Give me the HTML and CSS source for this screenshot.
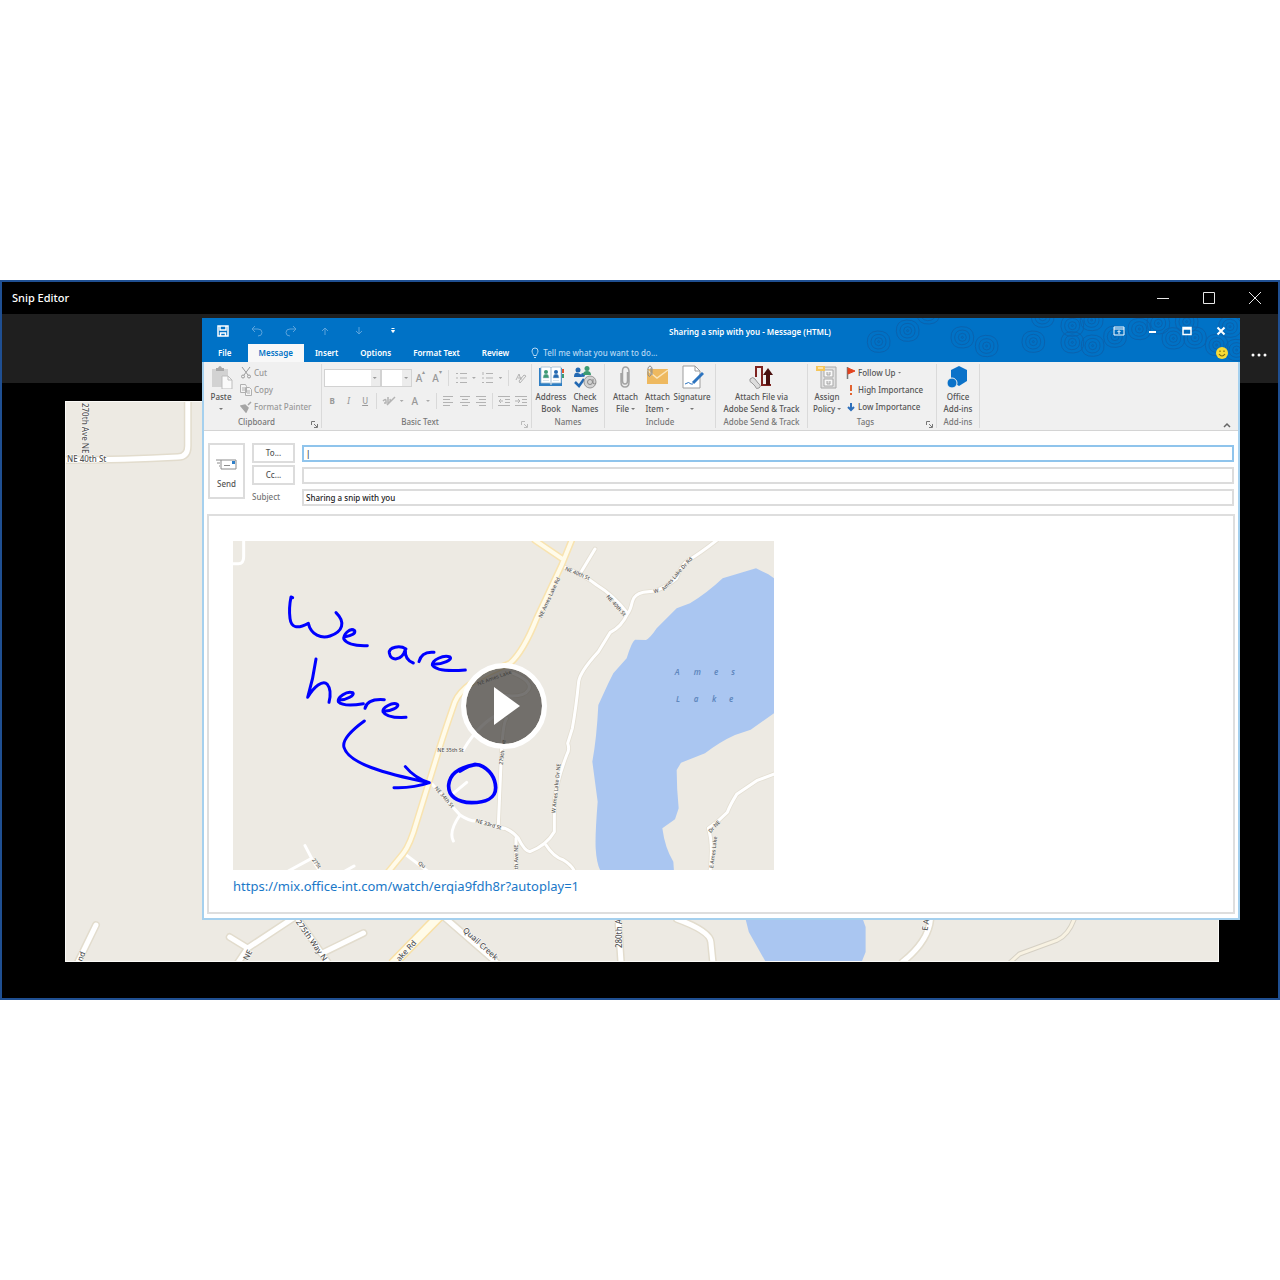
FILE: index.html
```html
<!DOCTYPE html>
<html lang="en">
<head>
    <meta charset="UTF-8">
    <meta name="viewport" content="width=device-width, initial-scale=1.0">
    <title>Snip Editor</title>
    <link rel="stylesheet" href="styles.css">
</head>
<body>
    <div class="editor">
        <header class="editor-title">
            <span>Snip Editor</span>
            <div class="editor-controls">
                <button type="button" aria-label="Minimize"><svg width="12" height="12" viewBox="0 0 12 12"><path d="M0 6.5h12"/></svg></button>
                <button type="button" aria-label="Maximize"><svg width="12" height="12" viewBox="0 0 12 12"><path d="M.5.5h11v11H.5z"/></svg></button>
                <button type="button" aria-label="Close"><svg width="12" height="12" viewBox="0 0 12 12"><path d="M0 0l12 12M12 0L0 12"/></svg></button>
            </div>
        </header>
        <div class="editor-toolbar">
            <button type="button" aria-label="More"><svg width="16" height="4" viewBox="0 0 16 4"><circle cx="2" cy="2" r="1.5"/><circle cx="8" cy="2" r="1.5"/><circle cx="14" cy="2" r="1.5"/></svg></button>
        </div>
        <div class="canvas">
            <svg class="map" viewBox="0 0 1154 561" preserveAspectRatio="xMinYMin slice">
                <rect width="1154" height="561" fill="#edeae3"/>
                <g class="road-edge">
                    <path d="M122 0V44Q122 55 112 55Q60 58 0 58"/>
                    <path d="M30 524L12 561M164 536L182 547L229 516M182 547L170 565M298 532L259 551M233 519L262 561"/>
                    <path d="M380 517L433 563M553 517L556 561M612 518Q645 530 646 541L648 561M866 518Q864 540 838 561"/>
                </g>
                <g class="road">
                    <path d="M122 0V44Q122 55 112 55Q60 58 0 58"/>
                    <path d="M30 524L12 561M164 536L182 547L229 516M182 547L170 565M298 532L259 551M233 519L262 561"/>
                    <path d="M380 517L433 563M553 517L556 561M612 518Q645 530 646 541L648 561M866 518Q864 540 838 561"/>
                </g>
                <path d="M374 515L327 563" stroke="#f9e0a4" stroke-width="11"/>
                <path d="M374 515L327 563" stroke="#fffbe8" stroke-width="8"/>
                <path d="M1010 518Q1004 534 993 539L955 553L944 563" fill="none" stroke="#d5d0c4" stroke-width="5"/>
                <path d="M1010 518Q1004 534 993 539L955 553L944 563" fill="none" stroke="#f8f2e2" stroke-width="3"/>
                <path d="M680 515L684 531L701 561H797L801 551V526L797 515Z" fill="#aac6f1"/>
                <g class="street">
                    <text x="1" y="60">NE 40th St</text>
                    <text transform="translate(16 1) rotate(90)">270th Ave NE</text>
                    <text transform="translate(16 561) rotate(-68)">nd</text>
                    <text transform="translate(182 560) rotate(-62)">NE</text>
                    <text transform="translate(230 521) rotate(55)">275th Way N</text>
                    <text transform="translate(334 561) rotate(-47)">ake Rd</text>
                    <text transform="translate(397 530) rotate(42)">Quail Creek</text>
                    <text transform="translate(557 547) rotate(-90)">280th Ave</text>
                    <text transform="translate(863 530) rotate(-82)">E Ames</text>
                </g>
            </svg>
        </div>

        <section class="mail">
            <header class="mail-header">
                <svg class="rings" width="380" height="44" viewBox="180 9 1140 132">
                    <defs>
                        <g id="ring">
                            <path d="M-34 2Q-35-30-4-32Q32-33 34-2Q36 30 3 32Q-32 34-34 2Z"/>
                            <path d="M-23-1Q-21-22 1-22Q23-20 22 2Q20 22-2 22Q-23 20-23-1Z"/>
                            <circle r="12"/><circle r="3"/>
                        </g>
                    </defs>
                    <use href="#ring" x="236" y="80"/><use href="#ring" x="323" y="47"/><use href="#ring" x="487" y="67"/>
                    <use href="#ring" x="560" y="93"/><use href="#ring" x="700" y="80"/><use href="#ring" x="817" y="82"/>
                    <use href="#ring" x="878" y="92"/><use href="#ring" x="945" y="65"/><use href="#ring" x="817" y="32"/>
                    <use href="#ring" x="385" y="-5"/><use href="#ring" x="728" y="5"/><use href="#ring" x="875" y="15"/>
                    <use href="#ring" x="1018" y="42"/><use href="#ring" x="1075" y="25"/><use href="#ring" x="1120" y="70"/>
                    <use href="#ring" x="1185" y="68"/><use href="#ring" x="1160" y="20"/><use href="#ring" x="1250" y="90"/>
                    <use href="#ring" x="1290" y="35"/><use href="#ring" x="1310" y="105"/>
                </svg>
                <div class="title-row">
                    <div class="quick">
                        <button type="button" aria-label="Save"><svg width="12" height="12" viewBox="0 0 12 12"><path d="M1 1h10v10H1zM3 1v4h6V1M3.500 11V8h5v3" fill="none" stroke="#fff" stroke-width="1.500"/></svg></button>
                        <button type="button" aria-label="Undo" disabled><svg width="12" height="12" viewBox="0 0 12 12"><path d="M4 1L1 4l3 3M1 4h6q4 0 4 3.500T7 11"/></svg></button>
                        <button type="button" aria-label="Redo" disabled><svg width="12" height="12" viewBox="0 0 12 12"><path d="M8 1l3 3-3 3M11 4H5Q1 4 1 7.500T5 11"/></svg></button>
                        <button type="button" aria-label="Previous item" disabled><svg width="12" height="12" viewBox="0 0 12 12"><path d="M6 10V3M3 6l3-3 3 3"/></svg></button>
                        <button type="button" aria-label="Next item" disabled><svg width="12" height="12" viewBox="0 0 12 12"><path d="M6 2v7M3 6l3 3 3-3"/></svg></button>
                        <button type="button" aria-label="Customize toolbar"><svg width="6" height="8" viewBox="0 0 6 8"><path d="M1.500 1.500h3M1.500 3.500h3L3 5.500z" fill="#fff" stroke="#fff" stroke-width="1"/></svg></button>
                    </div>
                    <h1>Sharing a snip with you - Message (HTML)</h1>
                    <div class="window-controls">
                        <button type="button" aria-label="Ribbon display options"><svg width="12" height="10" viewBox="0 0 12 10"><path d="M1 1h10v8H1zM1 3h10M6 8V5M4.500 6L6 4.500 7.500 6"/></svg></button>
                        <button type="button" aria-label="Minimize"><svg width="10" height="10" viewBox="0 0 10 10"><path d="M1 6h7" stroke-width="2"/></svg></button>
                        <button type="button" aria-label="Maximize"><svg width="10" height="10" viewBox="0 0 10 10"><path d="M1 1.500h8v7H1zM1 3h8" stroke-width="1.500"/></svg></button>
                        <button type="button" aria-label="Close"><svg width="10" height="10" viewBox="0 0 10 10"><path d="M1.500 1.500l7 7M8.500 1.500l-7 7" stroke-width="2"/></svg></button>
                    </div>
                </div>
                <nav class="tabs">
                    <button type="button" class="file">File</button>
                    <button type="button" class="active">Message</button>
                    <button type="button">Insert</button>
                    <button type="button">Options</button>
                    <button type="button">Format Text</button>
                    <button type="button">Review</button>
                    <button type="button" class="tell-me">
                        <svg width="8" height="12" viewBox="0 0 8 12"><path d="M2.500 8.500C2.500 7 1 6 1 4a3 3 0 0 1 6 0c0 2-1.500 3-1.500 4.500zM3 10.500h2" fill="none" stroke="#b5d7f3"/></svg>
                        Tell me what you want to do...
                    </button>
                    <svg class="smiley" width="14" height="14" viewBox="0 0 14 14"><circle cx="7" cy="7" r="6" fill="#f8db36"/><path d="M5 4.500v1.500M9 4.500v1.500M4 8q3 4 6 0" fill="none" stroke="#7d6a10" stroke-width="1.200"/></svg>
                </nav>
            </header>

            <div class="ribbon">
                <div class="group clipboard">
                    <div class="tools">
                        <button type="button" class="big">
                            <svg width="24" height="24" viewBox="0 0 24 24"><path d="M3 4h16v18H3z" fill="#d2d2d2"/><path d="M7 6V3h2q2-4 4 0h2v3z" fill="#a9a9a9"/><path d="M13 11h6l4 4v9H13z" fill="#fafafa" stroke="#bdbdbd"/><path d="M19 11v4h4" fill="none" stroke="#bdbdbd"/></svg>
                            Paste<i class="arrow"></i>
                        </button>
                        <div class="list">
                            <button type="button" disabled><svg width="12" height="12" viewBox="0 0 12 12"><g fill="none" stroke="#9a9a9a"><path d="M2 0l6 8M10 0L4 8"/><circle cx="3" cy="9.500" r="1.500"/><circle cx="9" cy="9.500" r="1.500"/></g></svg>Cut</button>
                            <button type="button" disabled><svg width="12" height="12" viewBox="0 0 12 12"><path d="M.5.5h5l1 2v6h-6zM5.500 3.500h4l2 2v6h-6zM2 4h3M2 6h3M7 7h3M7 9h3" fill="#f4f4f4" stroke="#b0b0b0"/></svg>Copy</button>
                            <button type="button" disabled><svg width="12" height="12" viewBox="0 0 12 12"><path d="M1 5l4-1 3 3-2 4zM8 4l3-3" fill="#a5a5a5" stroke="#a5a5a5" stroke-width="1.500"/></svg>Format Painter</button>
                        </div>
                    </div>
                    <div class="caption">Clipboard</div>
                    <svg class="launcher" width="7" height="7" viewBox="0 0 7 7"><path d="M.5 4V.5H4M3 3l3 3M6.500 3v3.500H3"/></svg>
                </div>

                <div class="group basic">
                    <div class="format">
                        <div class="format-row">
                            <span class="combo font"><select aria-label="Font" disabled><option></option></select></span>
                            <span class="combo size"><select aria-label="Font size" disabled><option></option></select></span>
                            <button type="button" class="grow" aria-label="Grow font" disabled>A<sup>▴</sup></button>
                            <button type="button" class="grow" aria-label="Shrink font" disabled>A<sup>▾</sup></button>
                            <i class="rule"></i>
                            <button type="button" aria-label="Bullets" disabled><svg width="12" height="12" viewBox="0 0 12 12"><path d="M1 1.500h2M5 1.500h7M1 6h2M5 6h7M1 10.500h2M5 10.500h7"/></svg></button>
                            <i class="arrow"></i>
                            <button type="button" aria-label="Numbering" disabled><svg width="12" height="12" viewBox="0 0 12 12"><path d="M2 0v3M5 1.500h7M1 6h2M5 6h7M1 10.500h2M5 10.500h7"/></svg></button>
                            <i class="arrow"></i>
                            <i class="rule"></i>
                            <button type="button" aria-label="Styles" disabled><svg width="12" height="12" viewBox="0 0 12 12"><path d="M1 8l3-6 2 6M3 6h4M5 11l6-7-2-1-5 6z"/></svg></button>
                        </div>
                        <div class="format-row">
                            <button type="button" disabled><b>B</b></button>
                            <button type="button" disabled><em>I</em></button>
                            <button type="button" disabled><u>U</u></button>
                            <i class="rule"></i>
                            <button type="button" aria-label="Highlight" disabled><svg width="14" height="12" viewBox="0 0 14 12"><path d="M1 6q3-3 3 0v2H2M6 2v6q3-1 2-4M5 10l8-8" stroke-width="1.500"/></svg></button>
                            <i class="arrow"></i>
                            <button type="button" class="grow" aria-label="Font color" disabled>A</button>
                            <i class="arrow"></i>
                            <i class="rule"></i>
                            <button type="button" aria-label="Align left" disabled><svg width="12" height="10" viewBox="0 0 12 10"><path d="M1 .5h10M1 3.500h7M1 6.500h10M1 9.500h7"/></svg></button>
                            <button type="button" aria-label="Center" disabled><svg width="12" height="10" viewBox="0 0 12 10"><path d="M1 .5h10M3 3.500h6M1 6.500h10M3 9.500h6"/></svg></button>
                            <button type="button" aria-label="Align right" disabled><svg width="12" height="10" viewBox="0 0 12 10"><path d="M1 .5h10M4 3.500h7M1 6.500h10M4 9.500h7"/></svg></button>
                            <i class="rule"></i>
                            <button type="button" aria-label="Decrease indent" disabled><svg width="12" height="10" viewBox="0 0 12 10"><path d="M0 .5h12M7 3.500h5M7 6.500h5M0 9.500h12M5 5H1M3 3L1 5l2 2"/></svg></button>
                            <button type="button" aria-label="Increase indent" disabled><svg width="12" height="10" viewBox="0 0 12 10"><path d="M0 .5h12M7 3.500h5M7 6.500h5M0 9.500h12M0 5h5M3 3l2 2-2 2"/></svg></button>
                        </div>
                    </div>
                    <div class="caption">Basic Text</div>
                    <svg class="launcher faded" width="7" height="7" viewBox="0 0 7 7"><path d="M.5 4V.5H4M3 3l3 3M6.500 3v3.500H3"/></svg>
                </div>

                <div class="group names">
                    <div class="tools">
                        <button type="button" class="big">
                            <svg width="26" height="24" viewBox="0 0 26 24"><path d="M1 3h23v18H1z" fill="#2f7fc4"/><path d="M3 2h9l1 1 1-1h9v16h-9l-1 2-1-2H3z" fill="#fff" stroke="#9fbbd2" stroke-width=".8"/><path d="M13 3v16" stroke="#9fbbd2"/><path d="M24 4h2v4h-2z" fill="#e2552d"/><path d="M24 9h2v4h-2z" fill="#3d9b73"/><circle cx="8" cy="7" r="2" fill="#3d9b73"/><path d="M5 13q0-4 3-4t3 4zM5 15.500h6" fill="#3d9b73" stroke="#b5c8d6" stroke-width=".5"/><circle cx="18" cy="7" r="2" fill="#2369b3"/><path d="M15 13q0-4 3-4t3 4zM15 15.500h6" fill="#2369b3" stroke="#b5c8d6" stroke-width=".5"/></svg>
                            Address<br>Book
                        </button>
                        <button type="button" class="big">
                            <svg width="24" height="24" viewBox="0 0 24 24"><g fill="#2369b3"><circle cx="5" cy="5" r="2.500"/><path d="M1 12q0-5 4-4t4 4z"/><circle cx="10" cy="10" r="2"/></g><path d="M2 17l4 4 5-7" fill="none" stroke="#2369b3" stroke-width="2.500"/><g fill="#3d9b73"><circle cx="14" cy="3.500" r="2.500"/><path d="M10 10q0-4 4-4t4 4z"/></g><circle cx="17" cy="17" r="6" fill="#d2d2d2" stroke="#969696"/><circle cx="17" cy="17" r="2.500" fill="none" stroke="#888"/><path d="M20 14v4q1 2 3 0" fill="none" stroke="#888"/></svg>
                            Check<br>Names
                        </button>
                    </div>
                    <div class="caption">Names</div>
                </div>

                <div class="group include">
                    <div class="tools">
                        <button type="button" class="big">
                            <svg width="12" height="24" viewBox="0 0 12 24"><path d="M8.500 7v9q0 3-2.500 3t-2.500-3V6Q3.500 2 6.500 2T10 6v11q0 5-4 5t-4-5V8" fill="none" stroke="#a3a3a3" stroke-width="1.500"/></svg>
                            Attach<br>File<i class="arrow inline"></i>
                        </button>
                        <button type="button" class="big">
                            <svg width="24" height="24" viewBox="0 0 24 24"><path d="M2 4h21v15H2z" fill="#eeb960"/><path d="M2 5l10 8L23 5" fill="none" stroke="#fbe5ba" stroke-width="1.500"/><path d="M6 3v7q-2 3-3 0V3q2-4 4 0v7" fill="none" stroke="#8e8e8e"/></svg>
                            Attach<br>Item<i class="arrow inline"></i>
                        </button>
                        <button type="button" class="big">
                            <svg width="24" height="24" viewBox="0 0 24 24"><path d="M3 1h12l5 5v17H3z" fill="#fff" stroke="#9d9d9d"/><path d="M15 1v5h5" fill="none" stroke="#9d9d9d"/><path d="M13 18L23 8" stroke="#2d74bf" stroke-width="3"/><path d="M5 19q4-3 6 0h2" fill="none" stroke="#2d74bf"/></svg>
                            Signature<i class="arrow"></i>
                        </button>
                    </div>
                    <div class="caption">Include</div>
                </div>

                <div class="group adobe">
                    <div class="tools">
                        <button type="button" class="big">
                            <svg width="24" height="24" viewBox="0 0 24 24"><path d="M14 2H7v10M13 2v18h9" fill="none" stroke="#7e2320" stroke-width="2"/><path d="M19 20V9" stroke="#4a100f" stroke-width="4"/><path d="M14 10l5-7 5 7z" fill="#4a100f"/><path d="M1 14q3-3 5 0l3 4q4 3 1 5t-4-2l-3-3q-3-1-2-4z" fill="#ddd" stroke="#999"/></svg>
                            Attach File via<br>Adobe Send &amp; Track
                        </button>
                    </div>
                    <div class="caption">Adobe Send &amp; Track</div>
                </div>

                <div class="group tags">
                    <div class="tools">
                        <button type="button" class="big">
                            <svg width="24" height="24" viewBox="0 0 24 24"><path d="M6 2h15v21H6z" fill="#e0e0e0" stroke="#a8a8a8"/><path d="M9 5h9v7H9zM9 14h9v7H9zM12 7v3h3V7M12 16v3h3v-3" fill="#f8f8f8" stroke="#a8a8a8"/><path d="M1 1h9v5H1z" fill="#f5c65b"/><path d="M3 3h5" stroke="#fff"/></svg>
                            Assign<br>Policy<i class="arrow inline"></i>
                        </button>
                        <div class="list">
                            <button type="button"><svg width="10" height="12" viewBox="0 0 10 12"><path d="M1.500 0v12" stroke="#777" stroke-width="1.500"/><path d="M2 1l7 3-7 3z" fill="#e2431f" stroke="#e2431f"/></svg>Follow Up<i class="arrow"></i></button>
                            <button type="button"><svg width="10" height="12" viewBox="0 0 10 12"><path d="M5 1v6M5 9v2" stroke="#e2622f" stroke-width="2"/></svg>High Importance</button>
                            <button type="button"><svg width="10" height="12" viewBox="0 0 10 12"><path d="M5 2v7M2 6l3 3 3-3" fill="none" stroke="#2d6fbb" stroke-width="2"/></svg>Low Importance</button>
                        </div>
                    </div>
                    <div class="caption">Tags</div>
                    <svg class="launcher" width="7" height="7" viewBox="0 0 7 7"><path d="M.5 4V.5H4M3 3l3 3M6.500 3v3.500H3"/></svg>
                </div>

                <div class="group addins">
                    <div class="tools">
                        <button type="button" class="big">
                            <svg width="24" height="24" viewBox="0 0 24 24"><path d="M13 1l8 4v11l-8 5-8-5V5z" fill="#0b72c9"/><circle cx="6" cy="18" r="5" fill="#0b72c9" stroke="#f0f0f0"/></svg>
                            Office<br>Add-ins
                        </button>
                    </div>
                    <div class="caption">Add-ins</div>
                </div>
                <button type="button" class="collapse" aria-label="Collapse ribbon"><svg width="8" height="6" viewBox="0 0 8 6"><path d="M1 5l3-3 3 3" fill="none" stroke="#666" stroke-width="1.500"/></svg></button>
            </div>

            <form class="fields">
                <button type="button" class="send">
                    <svg width="22" height="14" viewBox="0 0 22 14"><path d="M5 2h15v9H5zM8 7.500h6M0 2h5M1 5h3M3 8h1" fill="none" stroke="#8c8c8c"/><path d="M16 3h3v3h-3z" fill="#2d7fc9"/></svg>
                    Send
                </button>
                <button type="button" class="pick">To...</button>
                <input type="text" class="focused" aria-label="To" value="|">
                <button type="button" class="pick">Cc...</button>
                <input type="text" aria-label="Cc">
                <label for="subject">Subject</label>
                <input type="text" id="subject" value="Sharing a snip with you">
            </form>

            <div class="message">
                <div class="snip">
                    <svg viewBox="0 0 1623 987">
                        <rect width="1623" height="987" fill="#edeae3"/>
                        <g transform="translate(801 -18)">
                            <path d="M822 130L805 118L768 100L668 130Q620 175 570 205L530 220L470 280Q450 310 438 315L405 314Q395 320 380 370L340 415L325 445L295 510Q290 610 277 680L293 800Q285 900 287 940Q290 990 303 1010H522L520 980Q495 940 487 880L525 853L536 820Q530 760 530 705L543 683L615 655Q660 620 705 600L752 584L822 535Z" fill="#aac6f1"/>
                            <g class="small-edge">
                                <path d="M650 16Q600 55 565 76Q545 85 530 130Q500 155 465 168L430 172Q402 178 397 200Q390 230 383 235Q365 275 330 293L295 350Q240 410 236 440Q228 520 217 580L203 625Q210 645 200 660Q170 740 163 800V890Q140 930 90 950Q75 950 55 910Q30 880 0 877"/>
                                <path d="M190 95Q260 125 290 150Q340 180 383 235M285 42L245 108M138 930Q160 965 190 975Q215 990 224 1010M48 910V1010M825 716L770 737L710 778Q690 810 682 832Q655 860 625 880Q640 925 630 1010"/>
                                <path d="M5 640Q10 560 20 550M0 480Q70 490 85 465T40 415M5 640L-5 870"/>
                            </g>
                            <g class="small-road">
                                <path d="M650 16Q600 55 565 76Q545 85 530 130Q500 155 465 168L430 172Q402 178 397 200Q390 230 383 235Q365 275 330 293L295 350Q240 410 236 440Q228 520 217 580L203 625Q210 645 200 660Q170 740 163 800V890Q140 930 90 950Q75 950 55 910Q30 880 0 877"/>
                                <path d="M190 95Q260 125 290 150Q340 180 383 235M285 42L245 108M138 930Q160 965 190 975Q215 990 224 1010M48 910V1010M825 716L770 737L710 778Q690 810 682 832Q655 860 625 880Q640 925 630 1010"/>
                                <path d="M5 640Q10 560 20 550M0 480Q70 490 85 465T40 415M5 640L-5 870"/>
                            </g>
                        </g>
                        <g transform="translate(-9 -18)">
                            <g class="small-road">
                                <path d="M41 16V65Q41 86 25 86H5M700 645Q750 560 820 530M600 740L690 840Q720 860 740 858L820 880M690 840Q655 890 670 918M710 742L670 775M225 932L245 970L175 1008M245 970L270 1010M345 1008L372 993M522 955L595 1010"/>
                            </g>
                            <path class="highway-edge" d="M1025 16L995 90L920 250Q880 350 840 385Q700 440 675 500Q640 600 625 650L560 860Q540 930 520 955L475 1010M915 16L995 70"/>
                            <path class="highway" d="M1025 16L995 90L920 250Q880 350 840 385Q700 440 675 500Q640 600 625 650L560 860Q540 930 520 955L475 1010M915 16L995 70"/>
                            <g class="small-street">
                                <text transform="translate(935 250) rotate(-65)">NE Ames Lake Rd</text>
                                <text transform="translate(1004 105) rotate(23)">NE 40th St</text>
                                <text transform="translate(1128 186) rotate(48)">NE 40th St</text>
                                <text transform="translate(1272 175) rotate(-12)">W</text>
                                <text transform="translate(1302 168) rotate(-48)">Ames Lake Dr Rd</text>
                                <text transform="translate(976 835) rotate(-84)">W Ames Lake Dr NE</text>
                                <text transform="translate(1450 1000) rotate(-83)">E Ames Lake</text>
                                <text transform="translate(1442 895) rotate(-48)">Dr NE</text>
                                <text transform="translate(864 1003) rotate(-90)">th Ave NE</text>
                                <text transform="translate(818 690) rotate(-83)">279th Ave</text>
                                <text transform="translate(744 452) rotate(-20)">NE Ames Lake</text>
                                <text x="622" y="651">NE 35th St</text>
                                <text transform="translate(613 760) rotate(49)">NE 34th St</text>
                                <text transform="translate(736 862) rotate(16)">NE 33rd St</text>
                                <text transform="translate(245 975) rotate(52)">275t</text>
                                <text transform="translate(563 988) rotate(30)">Qu</text>
                            </g>
                            <g class="lake">
                                <text x="1334 1391 1452 1504" y="420">Ames</text>
                                <text x="1338 1391 1446 1497" y="500">Lake</text>
                            </g>
                            <g class="ink">
                                <path d="M188 188L183 186Q176 220 180 250Q185 292 235 265C243 300 275 312 300 303C338 290 348 262 318 233"/>
                                <path d="M345 305Q378 300 374 287C360 276 338 300 342 313Q355 334 412 332"/>
                                <path d="M528 342C510 330 476 336 478 354C482 380 515 378 526 344Q524 375 550 384M567 380Q575 348 612 352"/>
                                <path d="M610 388C640 388 668 374 660 366C640 358 606 376 607 390Q620 412 706 405"/>
                                <path d="M258 372Q250 430 233 487C252 455 278 434 292 448Q306 465 297 502"/>
                                <path d="M328 495C350 495 376 480 368 473C350 466 322 487 325 500Q340 516 400 506M405 520Q412 490 463 494"/>
                                <path d="M462 528C480 530 510 516 502 508C488 500 456 518 459 530Q470 550 528 547"/>
                                <path d="M403 558C370 582 335 612 342 637C356 685 460 715 598 743M526 695Q555 730 598 743Q550 760 492 758"/>
                                <path class="thick" d="M690 708Q725 684 748 690C780 702 796 730 797 758C797 790 765 803 725 803C680 802 654 782 656 750C660 720 678 700 735 689"/>
                            </g>
                        </g>
                    </svg>
                    <button type="button" class="play" aria-label="Play"><svg width="26" height="38" viewBox="0 0 26 38"><path d="M0 0l26 19L0 38z" fill="#fff"/></svg></button>
                </div>
                <a href="https://mix.office-int.com/watch/erqia9fdh8r?autoplay=1">https://mix.office-int.com/watch/erqia9fdh8r?autoplay=1</a>
            </div>
        </section>
    </div>
</body>
</html>
```
FILE: styles.css
```css
* {
    box-sizing: border-box;
}
body {
    margin: 0;
    min-height: 100vh;
    display: flex;
    flex-direction: column;
    justify-content: center;
    background: #fff;
    font-family: "Noto Sans", "Open Sans", sans-serif;
    font-size: 8px;
    font-weight: 500;
    line-height: 12px;
    color: #555;
}
button, input, select {
    font: inherit;
    color: inherit;
    margin: 0;
    padding: 0;
    border: 0;
    background: none;
}
svg {
    display: block;
    flex: none;
}

/* Snip Editor window */
.editor {
    position: relative;
    border: 2px solid #1f4f92;
    background: #000;
}
.editor-title {
    display: flex;
    justify-content: space-between;
    height: 32px;
    padding-left: 10px;
    align-items: center;
    color: #fff;
    font-size: 11px;
}
.editor-controls {
    display: flex;
}
.editor-controls button {
    width: 46px;
    height: 30px;
    display: flex;
    align-items: center;
    justify-content: center;
}
.editor-controls path {
    fill: none;
    stroke: #e8e8e8;
}
.editor-toolbar {
    height: 69px;
    background: #1f1f1f;
    display: flex;
    justify-content: flex-end;
    align-items: center;
    padding: 12px 11px 0 0;
}
.editor-toolbar button {
    height: 20px;
}
.editor-toolbar svg {
    fill: #fff;
}
.canvas {
    padding: 18px 59px 36px 63px;
}
.map {
    width: 100%;
    height: 561px;
    border: 1px solid #fbfaf7;
}
.road-edge, .road, .small-edge, .small-road, .highway, .highway-edge {
    fill: none;
    stroke-linecap: round;
    stroke-linejoin: round;
}
.road-edge {
    stroke: #e2dccd;
    stroke-width: 8px;
}
.road {
    stroke: #fff;
    stroke-width: 5px;
}
.street text {
    font-size: 8px;
    fill: #555;
    stroke: #fff;
    stroke-width: 1px;
    paint-order: stroke;
}

/* Message window */
.mail {
    position: absolute;
    top: 36px;
    left: 200px;
    right: 38px;
    background: #fff;
    border: 2px solid #a5d0ee;
    border-top: 0;
}
.mail-header {
    position: relative;
    height: 44px;
    margin: 0 -2px;
    background: #0072c6;
    color: #fff;
    overflow: hidden;
}
.rings {
    position: absolute;
    top: 0;
    right: 0;
    fill: none;
    stroke: #0a62ae;
    stroke-width: 3px;
}
.title-row, .tabs {
    position: relative;
    display: flex;
    align-items: center;
}
.title-row {
    height: 26px;
}
.quick {
    display: flex;
    padding-left: 4px;
}
.quick button, .window-controls button {
    width: 34px;
    height: 24px;
    display: flex;
    align-items: center;
    justify-content: center;
}
.quick svg {
    fill: none;
    stroke: #5ba3dc;
}
.title-row h1 {
    flex: 1;
    margin: 2px 12px 0 0;
    font-size: 8px;
    font-weight: 600;
    text-align: center;
}
.window-controls {
    display: flex;
    padding-right: 2px;
}
.window-controls svg {
    fill: none;
    stroke: #fff;
}
.tabs button {
    height: 18px;
    padding: 0 11px;
    font-weight: 600;
}
.tabs .file {
    padding: 0 16px;
}
.tabs .active {
    background: #f8f8f8;
    color: #0072c6;
}
.tabs .tell-me {
    display: flex;
    align-items: center;
    gap: 4px;
    color: #b5d7f3;
    font-weight: 500;
}
.smiley {
    margin-left: auto;
    margin-right: 11px;
}

/* Ribbon */
.ribbon {
    display: flex;
    height: 69px;
    padding-top: 2px;
    background: #f0f0f0;
    border-bottom: 1px solid #d4d4d4;
}
.group {
    position: relative;
    display: flex;
    flex-direction: column;
    border-right: 1px solid #dadada;
    margin-bottom: 2px;
}
.tools {
    display: flex;
    justify-content: center;
    height: 54px;
}
.caption {
    text-align: center;
    color: #777;
}
.launcher {
    position: absolute;
    right: 3px;
    bottom: 0;
    fill: none;
    stroke: #777;
}
.faded {
    stroke: #bbb;
}
.clipboard {
    width: 118px;
}
.basic {
    width: 210px;
}
.names {
    width: 73px;
}
.include {
    width: 111px;
}
.adobe {
    width: 92px;
}
.tags {
    width: 129px;
}
.addins {
    width: 43px;
}
.clipboard .tools, .tags .tools {
    justify-content: flex-start;
}
.clipboard .caption {
    padding-right: 12px;
}
.basic .caption, .tags .caption {
    padding-right: 13px;
}
.tags .tools {
    padding-left: 2px;
}
.big {
    display: block;
    min-width: 34px;
    text-align: center;
    white-space: nowrap;
}
.include .big {
    min-width: 32px;
}
.big svg {
    margin: 0 auto 2px;
}
.arrow {
    display: block;
    width: 4px;
    height: 2px;
    margin: 5px auto;
    background: #777;
    clip-path: polygon(0 0, 100% 0, 50% 100%);
}
.arrow.inline {
    display: inline-block;
    margin: 0 0 2px 2px;
}
.list {
    display: flex;
    flex-direction: column;
    padding-left: 2px;
}
.list button {
    display: flex;
    align-items: center;
    gap: 2px;
    height: 17px;
    white-space: nowrap;
}
.list button:disabled {
    color: #999;
}
.list .arrow {
    margin: 0;
}
.format {
    height: 54px;
    padding: 5px 2px 0;
}
.format-row {
    display: flex;
    align-items: center;
    height: 18px;
    margin-bottom: 5px;
    color: #999;
}
.format-row button {
    width: 17px;
    height: 18px;
    display: flex;
    align-items: center;
    justify-content: center;
}
.format-row svg {
    fill: none;
    stroke: #b3b3b3;
}
.format-row .arrow {
    margin: 0 3px;
    background: #aaa;
}
.format-row .grow {
    font-size: 10px;
}
.grow sup {
    font-size: 6px;
    line-height: 6px;
    align-self: flex-start;
}
.rule {
    width: 1px;
    height: 16px;
    margin: 0 3px;
    background: #d9d9d9;
}
.combo {
    position: relative;
    height: 18px;
    border: 1px solid #d2d2d2;
    background: #fff;
}
.combo select {
    appearance: none;
    width: 100%;
    height: 100%;
    border-right: 9px solid #e4e4e4;
}
.combo::after {
    content: "";
    position: absolute;
    right: 3px;
    top: 7px;
    width: 4px;
    height: 2px;
    background: #999;
    clip-path: polygon(0 0, 100% 0, 50% 100%);
}
.font {
    width: 58px;
}
.size {
    width: 32px;
}
.collapse {
    margin: auto 7px 2px auto;
}

/* Address fields */
.fields {
    display: grid;
    grid-template-columns: 37px 43px 1fr;
    grid-auto-rows: 20px;
    gap: 2px 7px;
    padding: 12px 4px 7px;
    align-items: center;
}
.send {
    grid-row: span 3;
    height: 56px;
    align-self: start;
    display: flex;
    flex-direction: column;
    align-items: center;
    justify-content: flex-end;
    gap: 6px;
    padding-bottom: 7px;
    border: 2px solid #dcdcdc;
}
.pick {
    height: 20px;
    border: 2px solid #dcdcdc;
}
.fields label {
    color: #777;
}
.fields input {
    width: 100%;
    height: 17px;
    padding: 0 2px;
    border: 2px solid #dcdcdc;
    color: #222;
}
.fields .focused {
    border-color: #8fc4ec;
}

/* Message body */
.message {
    margin: 0 3px 4px;
    min-height: 400px;
    padding: 25px 24px 10px;
    border: 2px solid #dedede;
}
.snip {
    position: relative;
    width: 541px;
    max-width: 100%;
}
.snip > svg {
    width: 100%;
    height: auto;
}
.small-edge {
    stroke: #e4dfd3;
    stroke-width: 14px;
}
.small-road {
    stroke: #fff;
    stroke-width: 9px;
}
.highway-edge {
    stroke: #f8e3b0;
    stroke-width: 21px;
}
.highway {
    stroke: #fffbea;
    stroke-width: 12px;
}
.small-street text {
    font-size: 16px;
    fill: #555;
    stroke: #f4f2ec;
    stroke-width: 3px;
    paint-order: stroke;
}
.lake text {
    font-size: 24px;
    font-style: italic;
    font-weight: 600;
    fill: #5f87bd;
}
.ink {
    fill: none;
    stroke: #00f;
    stroke-width: 9px;
    stroke-linecap: round;
    stroke-linejoin: round;
}
.ink .thick {
    stroke-width: 11px;
}
.play {
    position: absolute;
    inset: 0;
    margin: auto;
    width: 86px;
    height: 86px;
    padding-left: 6px;
    display: flex;
    align-items: center;
    justify-content: center;
    border: 5px solid #fff;
    border-radius: 50%;
    background: rgba(61, 58, 55, 0.7);
    background-clip: padding-box;
}
.message a {
    display: inline-block;
    margin-top: 7px;
    font-size: 13px;
    font-weight: 400;
    line-height: 18px;
    color: #1a78c8;
    text-decoration: none;
}
```
